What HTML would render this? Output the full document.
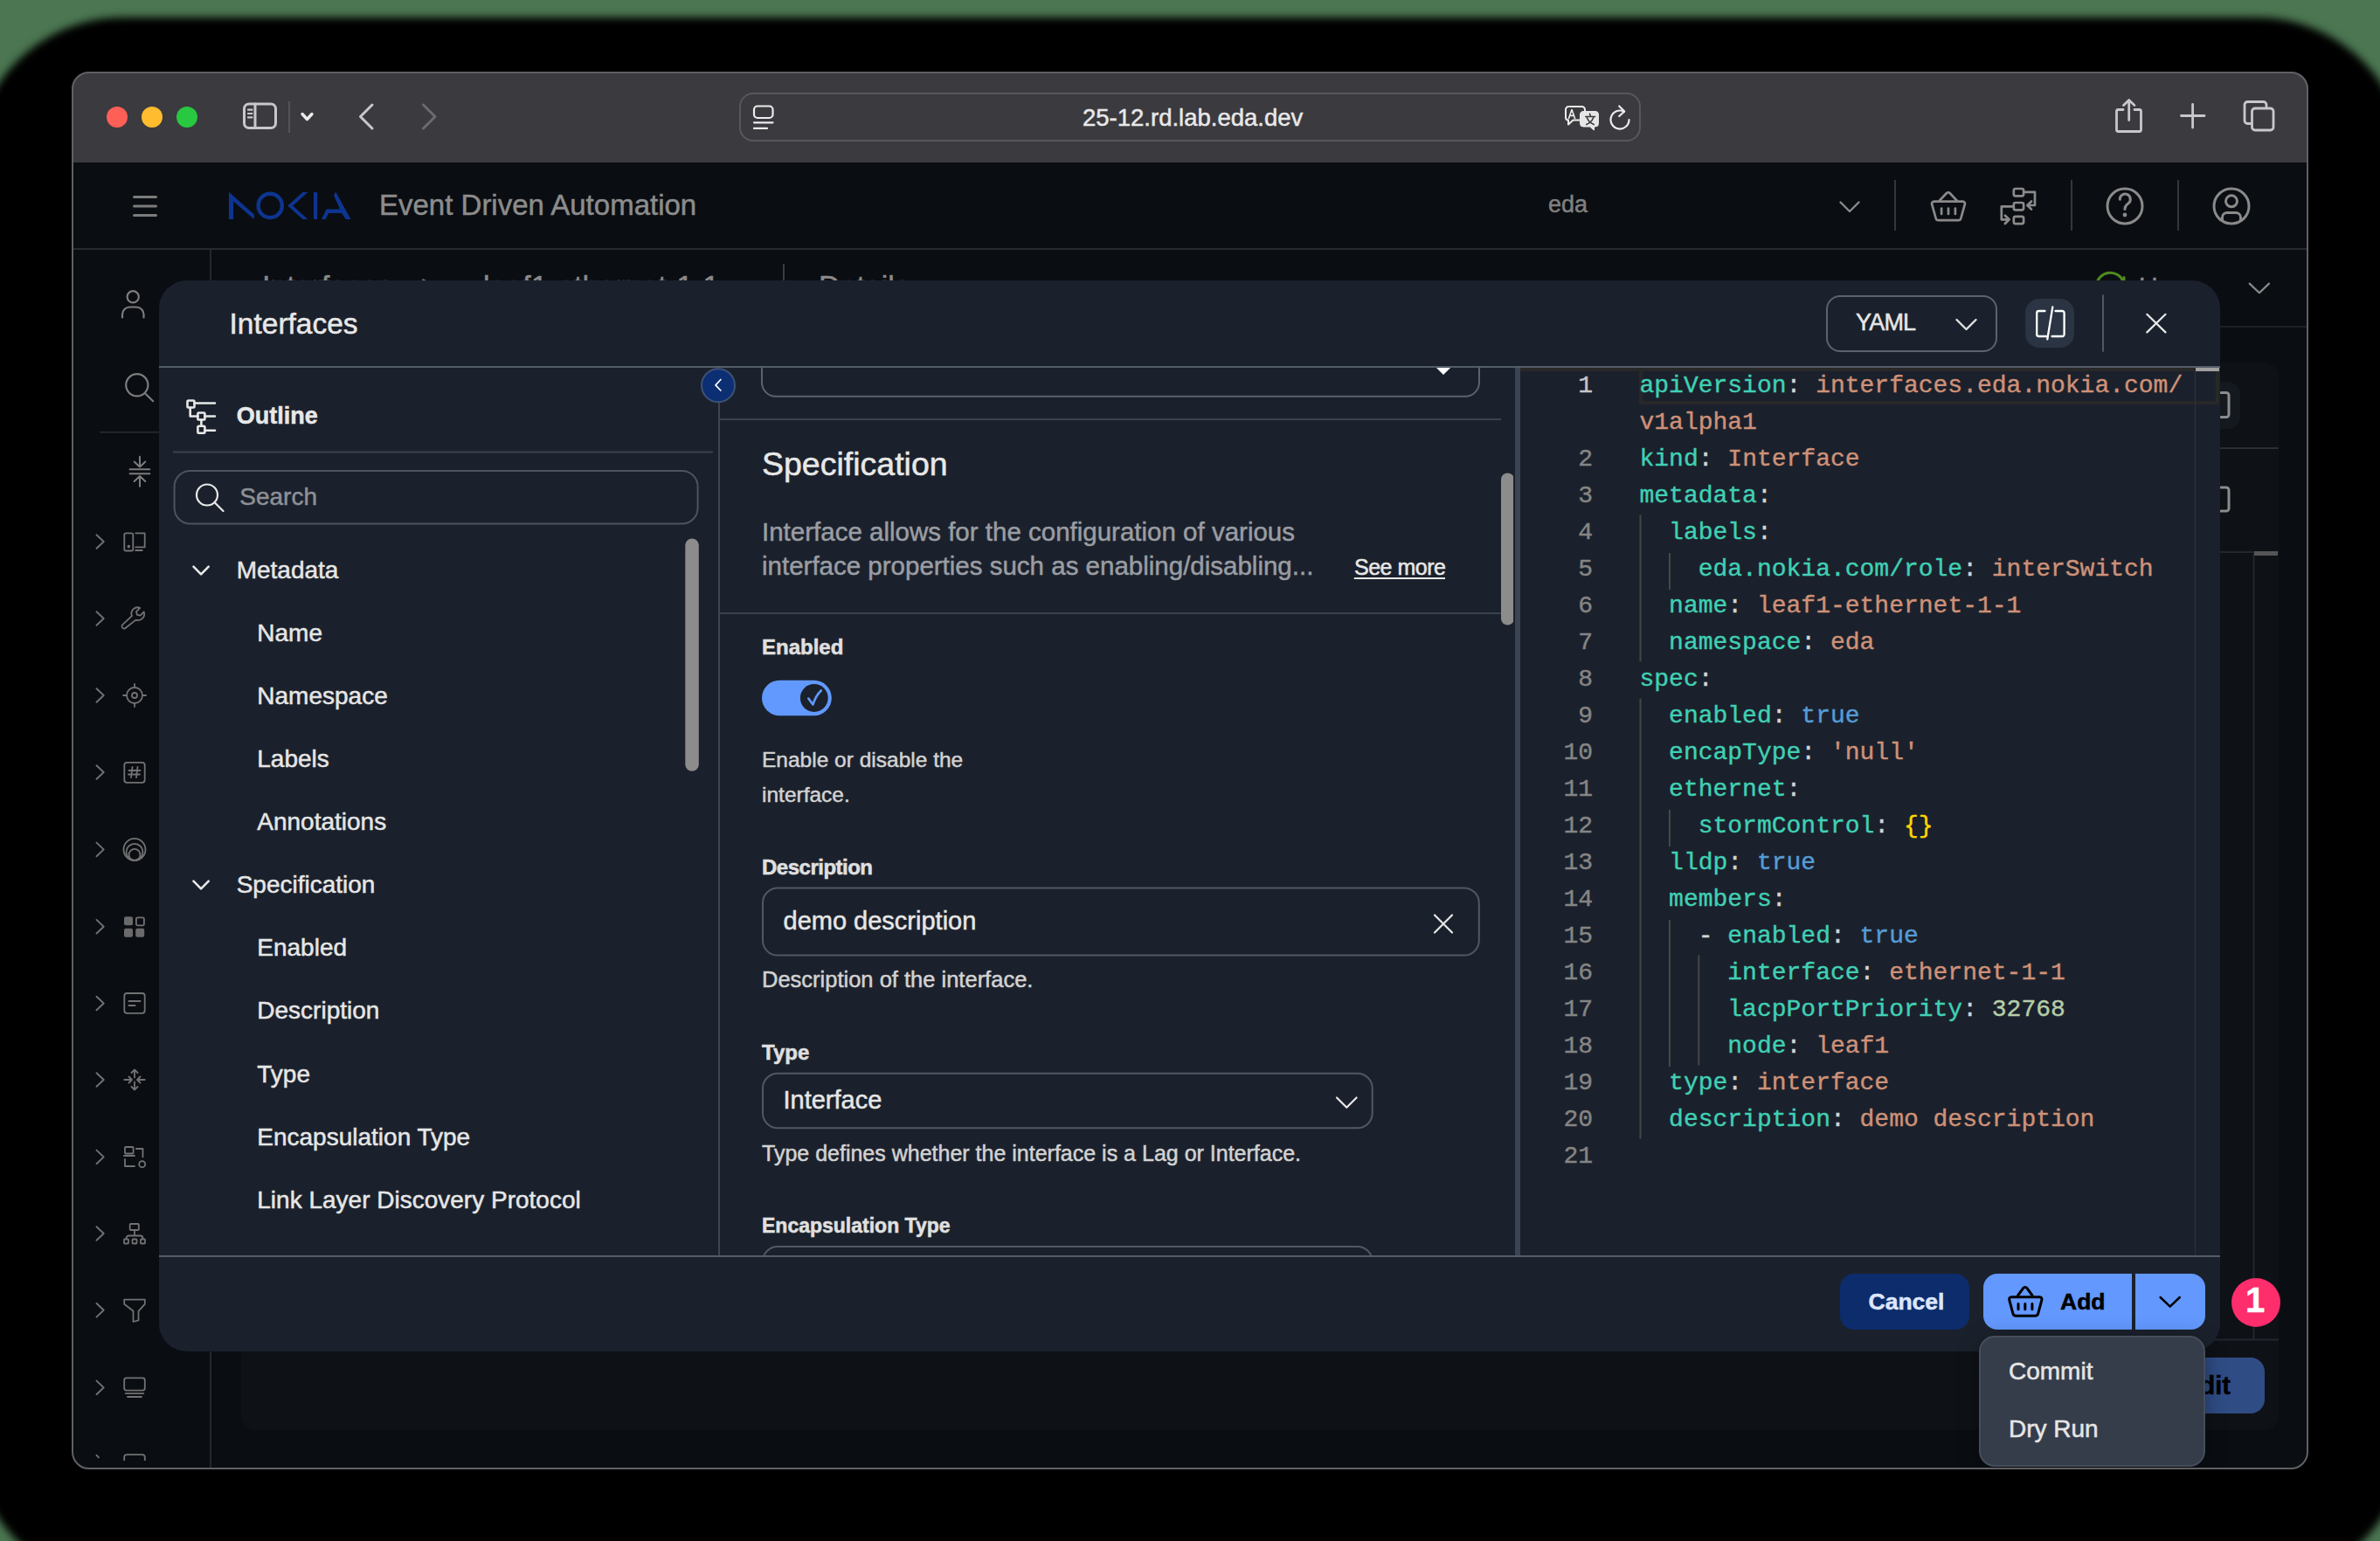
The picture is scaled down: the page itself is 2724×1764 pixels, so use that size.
<!DOCTYPE html>
<html><head><meta charset="utf-8">
<style>
*{box-sizing:border-box;margin:0;padding:0}
html,body{width:2724px;height:1764px;overflow:hidden;background:#4b7651;font-family:"Liberation Sans",sans-serif}
.a{position:absolute}
#shadow{position:absolute;left:-30px;top:20px;width:2784px;height:1794px;border-radius:170px;background:#000;filter:blur(5px)}
#win{position:absolute;left:82px;top:82px;width:2560px;height:1600px;border-radius:20px;overflow:hidden;background:#0a0d12}
#winb{position:absolute;left:82px;top:82px;width:2560px;height:1600px;border-radius:20px;border:2px solid #606064;pointer-events:none}
#pg{position:absolute;left:-82px;top:-82px;width:2724px;height:1764px}
.t{position:absolute;white-space:pre;line-height:1;-webkit-text-stroke:0.5px currentColor}
svg{position:absolute;overflow:visible}
</style></head><body>
<div id="shadow"></div>
<div id="win"><div id="pg">
  <!-- titlebar -->
  <div class="a" style="left:82px;top:82px;width:2560px;height:104px;background:#3b3a3f"></div>

  <!-- traffic lights -->
  <div class="a" style="left:122px;top:122px;width:24px;height:24px;border-radius:50%;background:#fe5f57"></div>
  <div class="a" style="left:162px;top:122px;width:24px;height:24px;border-radius:50%;background:#febc2e"></div>
  <div class="a" style="left:202px;top:122px;width:24px;height:24px;border-radius:50%;background:#28c840"></div>
  <svg style="left:0;top:0" width="2724" height="200" viewBox="0 0 2724 200" fill="none" stroke-linecap="round" stroke-linejoin="round">
    <rect x="279.5" y="119" width="36" height="27.5" rx="5.5" stroke="#c7c7cc" stroke-width="3"/>
    <line x1="292" y1="119" x2="292" y2="146.5" stroke="#c7c7cc" stroke-width="3"/>
    <path d="M284 125.7h4.5M284 130h4.5M284 134.4h4.5" stroke="#c7c7cc" stroke-width="2.2"/>
    <line x1="331" y1="116" x2="331" y2="152" stroke="#545358" stroke-width="2" stroke-linecap="butt"/>
    <path d="M346 130.5l5.5 6 5.5-6" stroke="#ececec" stroke-width="3.4"/>
    <path d="M426 120l-13.5 13.5 13.5 13.5" stroke="#c7c7cc" stroke-width="3"/>
    <path d="M484.5 120l13.5 13.5-13.5 13.5" stroke="#6b6a70" stroke-width="3"/>
    <rect x="847" y="107" width="1030" height="54" rx="15" stroke="#58575c" stroke-width="2"/>
    <rect x="863" y="121.5" width="21.5" height="13.5" rx="4" stroke="#ececec" stroke-width="2.2"/>
    <path d="M863 140.3h21.5M863 146.9h15" stroke="#ececec" stroke-width="2.2"/>
    <!-- translate -->
    <path d="M1797 122h13.5a3.5 3.5 0 0 1 3.5 3.5v2.5M1808 137.5h-7.5l-5.5 5v-5a3 3 0 0 1-3-3v-9a3.5 3.5 0 0 1 3.5-3.5" stroke="#ececec" stroke-width="2"/>
    <path d="M1795.5 135.5l3.5-10 3.5 10M1796.6 132.4h4.8" stroke="#ececec" stroke-width="1.6"/>
    <path d="M1812 127.5h14a3.5 3.5 0 0 1 3.5 3.5v10.5a3.5 3.5 0 0 1-3.5 3.5h-1.5v4l-5-4h-7.5a3.5 3.5 0 0 1-3.5-3.5v-10.5a3.5 3.5 0 0 1 3.5-3.5z" fill="#e6e6e6" stroke="#e6e6e6" stroke-width="1"/>
    <path d="M1814.8 133.5h10.8M1819.5 130.2l0.8 2.3M1816.3 134.5c1.5 4 4 6.5 8 8M1823.7 134.5c-1.5 4-4 6.5-8 8" stroke="#3b3a3f" stroke-width="1.6"/>
    <!-- reload -->
    <path d="M1864.5 137a10.5 10.5 0 1 1-5.5-9.2" stroke="#ececec" stroke-width="2.2" transform="rotate(0)"/>
    <path d="M1853.2 121.5l6 6-6 5.5" stroke="#ececec" stroke-width="2.2"/>
    <!-- share -->
    <path d="M2430 125.5h-5.5a2 2 0 0 0-2 2v21a2 2 0 0 0 2 2h24a2 2 0 0 0 2-2v-21a2 2 0 0 0-2-2h-5.5" stroke="#c7c7cc" stroke-width="2.8"/>
    <path d="M2436.7 137.5v-22.5M2430.5 120.5l6.2-6 6.2 6" stroke="#c7c7cc" stroke-width="2.8"/>
    <!-- plus -->
    <path d="M2509.6 119.5v26.5M2496.5 132.5h26.5" stroke="#c7c7cc" stroke-width="2.8"/>
    <!-- tabs -->
    <path d="M2576 141.5h-3.5a3.5 3.5 0 0 1-3.5-3.5v-18a3.5 3.5 0 0 1 3.5-3.5h18a3.5 3.5 0 0 1 3.5 3.5v3.5" stroke="#c7c7cc" stroke-width="2.8"/>
    <rect x="2577.5" y="124" width="24.5" height="25" rx="3.5" stroke="#c7c7cc" stroke-width="2.8"/>
  </svg>
  <div class="t" style="left:1239px;top:121.4px;font-size:27.5px;color:#e8e8e8">25-12.rd.lab.eda.dev</div>
  <!-- header -->
  <div class="a" style="left:82px;top:186px;width:2560px;height:100px;background:#0a0d12;border-bottom:2px solid #262a31"></div>

  <svg style="left:0;top:0" width="2724" height="300" viewBox="0 0 2724 300" fill="none" stroke-linecap="round" stroke-linejoin="round">
    <path d="M153.5 225.4h25M153.5 236h25M153.5 246.5h25" stroke="#7c7c7c" stroke-width="3"/>
    <g fill="#0d3590" stroke="none">
      <path d="M262.03 219.77L290.82 245.49V251.03L267.05 230.51V251.03H262.03Z"/>
      <path d="M352.4 220.1L335.1 235.4L352.4 251H346.5L329.2 235.4L346.5 220.1Z"/>
      <rect x="359" y="220.1" width="4.1" height="30.9"/>
      <path d="M384.3 219.8L401.5 251H395.7L391.1 243.9H376.1L372.6 251H368L373.5 239.6H389.1L382 223.4Z"/>
    </g>
    <circle cx="309.2" cy="235.4" r="13.6" stroke="#0d3590" stroke-width="4.4"/>
    <path d="M2106.5 231.5l10.5 10.5 10.5-10.5" stroke="#8a8a8a" stroke-width="2.4"/>
    <path d="M2169 206v58M2371 206v58M2493 206v58" stroke="#33363c" stroke-width="2" stroke-linecap="butt"/>
    <!-- basket -->
    <g stroke="#8a8a8a" stroke-width="2.7">
      <path d="M2220 229.5l8-8.5a2.5 2.5 0 0 1 3.6 0l8 8.5"/>
      <path d="M2213.5 230.6h33a2.5 2.5 0 0 1 2.4 3.1l-4.6 16.3a3 3 0 0 1-2.9 2.2h-22.8a3 3 0 0 1-2.9-2.2l-4.6-16.3a2.5 2.5 0 0 1 2.4-3.1z"/>
      <path d="M2222.1 238.5v6.5M2230 238.5v6.5M2237.9 238.5v6.5"/>
    </g>
    <!-- workflow -->
    <g stroke="#8a8a8a" stroke-width="2.7">
      <rect x="2304.8" y="216" width="11.3" height="8.3" rx="2"/>
      <rect x="2304.8" y="232" width="11.3" height="8.3" rx="2"/>
      <rect x="2304.8" y="247.8" width="11.3" height="8.3" rx="2"/>
      <path d="M2316.4 219.8h12.6v15.2h-8.5M2325 230.5l-4.6 4.5 4.6 4.6"/>
      <path d="M2304.3 236.3h-13.5v15h8.5M2294.9 246.7l4.7 4.6-4.7 4.7"/>
    </g>
    <!-- help -->
    <g stroke="#8a8a8a" stroke-width="3">
      <circle cx="2432" cy="236" r="20"/>
      <path d="M2426.3 228.3a6 6 0 1 1 9.5 4.6c-2.2 1.7-3.8 3.3-3.8 5.8v0.8"/>
    </g>
    <circle cx="2432" cy="246" r="2.4" fill="#8a8a8a"/>
    <!-- user -->
    <g stroke="#8a8a8a" stroke-width="3">
      <circle cx="2554" cy="236" r="20"/>
      <circle cx="2554" cy="230.3" r="6.5"/>
      <path d="M2543.5 252.5v-3.5a5.5 5.5 0 0 1 5.5-5.5h10a5.5 5.5 0 0 1 5.5 5.5v3.5"/>
    </g>
  </svg>
  <div class="t" style="left:434px;top:218.4px;font-size:33px;color:#8c8c8c">Event Driven Automation</div>
  <div class="t" style="left:1772px;top:221px;font-size:27px;color:#808080">eda</div>

  <svg style="left:0;top:0" width="300" height="1764" viewBox="0 0 300 1764" fill="none" stroke="#727272" stroke-width="1.8" stroke-linecap="round" stroke-linejoin="round">
    <circle cx="152.2" cy="339.8" r="6.6" stroke="#7c7c7c" stroke-width="2.2"/>
    <path d="M140 363.5v-3.5a8.5 8.5 0 0 1 8.5-8.5h7.5a8.5 8.5 0 0 1 8.5 8.5v3.5" stroke="#7c7c7c" stroke-width="2.2"/>
    <circle cx="156.8" cy="440.8" r="12.6" stroke="#7c7c7c" stroke-width="2.2"/>
    <path d="M166 450.2l9.2 9" stroke="#7c7c7c" stroke-width="2.2"/>
    <path d="M114 494.8H190" stroke="#23272e" stroke-width="2" stroke-linecap="butt"/>
    <path d="M148.6 537.3H171.3M148.6 542.2H171.3M160 522.7V534.5M153.7 528.5L160 534.5L166.3 528.5M160 556.7V545M153.7 551L160 545L166.3 551" stroke="#7c7c7c" stroke-width="2"/>
    <clipPath id="sbclip"><rect x="84" y="285" width="157" height="1387"/></clipPath>
    <g clip-path="url(#sbclip)"><path d="M110.5 612.2L118.7 620.0L110.5 627.8" stroke-width="1.9"/><g transform="translate(154 620)"><rect x="-11.7" y="-9.7" width="10" height="20.2" rx="1.8"/><circle cx="-6.7" cy="5.6" r="0.9" fill="#7c7c7c"/><path d="M1.2 -9.7H11.7V6.4H1.2M1.2 10H8.8"/></g><path d="M110.5 700.2L118.7 708.0L110.5 715.8" stroke-width="1.9"/><g transform="translate(154 708)"><path d="M-10.8 11.2a2.6 2.6 0 0 1-3.5-3.6l11.2-10.5a7.2 7.2 0 0 1 9.3-9.3l-4.2 4.3 0.9 3.6 3.6 0.9 4.2-4.2a7.2 7.2 0 0 1-9.3 9.2z"/></g><path d="M110.5 788.2L118.7 796.0L110.5 803.8" stroke-width="1.9"/><g transform="translate(154 796)"><circle r="9"/><circle r="3"/><path d="M0 -13V-9M0 9V13M-13 0H-9M9 0H13"/></g><path d="M110.5 876.2L118.7 884.0L110.5 891.8" stroke-width="1.9"/><g transform="translate(154 884)"><rect x="-11.7" y="-11.2" width="23.4" height="23" rx="3"/><path d="M-2.5 -6L-4 6M3.5 -6L2 6M-6.5 -2H6.5M-7 2.5H6"/></g><path d="M110.5 964.6L118.7 972.4L110.5 980.2" stroke-width="1.9"/><g transform="translate(154 972.4)"><circle r="12.5"/><circle cy="3" r="9.5"/><circle cy="6" r="6.5"/></g><path d="M110.5 1052.9L118.7 1060.7L110.5 1068.5" stroke-width="1.9"/><g transform="translate(154 1060.7)"><rect x="-12" y="-11.5" width="10" height="10" rx="2" fill="#6a6a6a" stroke="none"/><rect x="1.9" y="-10.3" width="9" height="9" rx="1.6"/><rect x="-12" y="2" width="10" height="10" rx="2" fill="#6a6a6a" stroke="none"/><rect x="1.2" y="2" width="10" height="10" rx="2" fill="#6a6a6a" stroke="none"/></g><path d="M110.5 1140.7L118.7 1148.5L110.5 1156.3" stroke-width="1.9"/><g transform="translate(154 1148.5)"><rect x="-11.7" y="-11.5" width="23.4" height="22.8" rx="3"/><path d="M-6.6 -2.5H6.6M-6.6 2.5H0.6"/></g><path d="M110.5 1228.2L118.7 1236.0L110.5 1243.8" stroke-width="1.9"/><g transform="translate(154 1236)"><path d="M0 -2.5V-11.5M-3.5 -8L0 -11.5L3.5 -8M0 2.5V11.5M-3.5 8L0 11.5L3.5 8M-11.7 0H-3M-6.5 -3.5L-3 0L-6.5 3.5M11.7 0H3M6.5 -3.5L3 0L6.5 3.5"/></g><path d="M110.5 1316.6L118.7 1324.4L110.5 1332.2" stroke-width="1.9"/><g transform="translate(154 1324.4)"><rect x="-11" y="-11.4" width="9.6" height="7.5" rx="0.8"/><path d="M-12 -1.4H0M2 -9.4H9.5V0M-11 2.6V10.6H0"/><circle cx="8.7" cy="8.3" r="3.5"/></g><path d="M110.5 1404.2L118.7 1412.0L110.5 1419.8" stroke-width="1.9"/><g transform="translate(154 1412)"><rect x="-5.3" y="-11" width="10.1" height="7" rx="0.8"/><path d="M0 -4V2.5M-9.5 5.5a3 3 0 0 1 3-3H6.5a3 3 0 0 1 3 3"/><rect x="-12" y="6.5" width="5" height="5" rx="0.8"/><rect x="-2.5" y="6.5" width="5" height="5" rx="0.8"/><rect x="7" y="6.5" width="5" height="5" rx="0.8"/></g><path d="M110.5 1492.0L118.7 1499.8L110.5 1507.6" stroke-width="1.9"/><g transform="translate(154 1499.8)"><path d="M-11.8 -12.2H11.8V-7L4.5 1V11.5L-1.5 13.2V1L-11.8 -7Z"/></g><path d="M110.5 1580.6L118.7 1588.4L110.5 1596.2" stroke-width="1.9"/><g transform="translate(154 1588.4)"><rect x="-11.8" y="-11.1" width="23.6" height="14.3" rx="2.5"/><path d="M-10.3 6.8H10.3M-8 10.6H8"/></g><path d="M110.5 1665.8L113 1668.3" stroke-width="1.9"/><g transform="translate(154 1667.6)"><path d="M-11.8 6V0.5a3 3 0 0 1 3-3H8.8a3 3 0 0 1 3 3V6"/></g></g>
  </svg>
  <!-- sidebar border -->
  <div class="a" style="left:240px;top:285px;width:2px;height:1400px;background:#23272e"></div>

  <!-- background page -->
  <div class="a" style="left:276px;top:415px;width:2332px;height:1222px;border-radius:16px;background:#0e1116"></div>
  <div class="a" style="left:241px;top:373px;width:2400px;height:2px;background:#1c2027"></div>
  <div class="t" style="left:300px;top:310px;font-size:34px;color:#8a8a8a">Interfaces</div>
  <div class="t" style="left:482px;top:310px;font-size:34px;color:#8a8a8a">&gt;</div>
  <div class="t" style="left:553px;top:310px;font-size:34px;color:#8a8a8a">leaf1-ethernet-1-1</div>
  <div class="a" style="left:896px;top:302px;width:2px;height:40px;background:#3a3d43"></div>
  <div class="t" style="left:937px;top:310px;font-size:34px;color:#8a8a8a">Details</div>
  <div class="t" style="left:2448px;top:313px;font-size:30px;color:#8a8a8a">Up</div>
  <svg style="left:0;top:0" width="2724" height="1764" viewBox="0 0 2724 1764" fill="none" stroke-linecap="round" stroke-linejoin="round">
    <path d="M2399.5 326a16 16 0 0 1 31 -3M2431 317.5v7h-6.5" stroke="#4d8a1e" stroke-width="3"/>
    <path d="M2574.7 324.6L2585.9 335.2L2597 324.6" stroke="#8a8a8a" stroke-width="2.2"/>
    <rect x="2480" y="437" width="84" height="54" rx="14" fill="#14181f" stroke="none"/>
    <path d="M2542 449.5h6a3 3 0 0 1 3 3v22a3 3 0 0 1-3 3h-6" stroke="#8c8c8c" stroke-width="3"/>
    <path d="M2542 558h6a3 3 0 0 1 3 3v21a3 3 0 0 1-3 3h-6" stroke="#8c8c8c" stroke-width="3"/>
    <path d="M276 513H2608" stroke="#2a2e35" stroke-width="2" stroke-linecap="butt"/>
    <path d="M276 632H2608M2579.5 634V1533.5M276 1533.5H2608" stroke="#23272e" stroke-width="2" stroke-linecap="butt"/>
    <rect x="2580" y="631" width="27" height="5" fill="#555" stroke="none"/>
  </svg>
  <div class="a" style="left:2470px;top:1554px;width:122px;height:64px;border-radius:16px;background:#2f4c85"></div>
  <div class="t" style="left:2453px;width:100px;text-align:right;top:1571.8px;font-size:29px;font-weight:bold;color:#000">Edit</div>
  <!-- modal -->
  <div id="modal" class="a" style="left:182px;top:321px;width:2359px;height:1226px;border-radius:32px;background:#1b212c"></div>


  <!-- form panel -->
  <svg style="left:0;top:0" width="2724" height="1764" viewBox="0 0 2724 1764" fill="none" stroke-linecap="round" stroke-linejoin="round">
    <clipPath id="formclip"><rect x="824" y="421" width="908" height="1016"/></clipPath>
    <g clip-path="url(#formclip)">
      <rect x="872" y="380" width="821" height="73.8" rx="16" stroke="#5a6370" stroke-width="2"/>
      <path d="M1644 421H1660.1L1652 429.1Z" fill="#ffffff" stroke="none"/>
      <path d="M824 480H1718M824 702H1718" stroke="#3a4250" stroke-width="2" stroke-linecap="butt"/>
      <path d="M1549.8 662H1654" stroke="#e8e8e8" stroke-width="1.8" stroke-linecap="butt"/>
      <rect x="872" y="778.8" width="79.8" height="40.4" rx="20.2" fill="#6199fe" stroke="none"/>
      <circle cx="931.8" cy="799" r="15.9" fill="#1b212c" stroke="none"/>
      <path d="M925.3 799.5L930.4 806.5C932.5 800 935.5 794.5 939.8 790.5" stroke="#6199fe" stroke-width="2.6"/>
      <rect x="873" y="1016.6" width="819.8" height="77" rx="17" stroke="#4f5866" stroke-width="2"/>
      <path d="M1642 1047.5L1662 1067.5M1662 1047.5L1642 1067.5" stroke="#e8e8e8" stroke-width="2.2"/>
      <rect x="873" y="1228.7" width="697.7" height="62.6" rx="17" stroke="#4f5866" stroke-width="2"/>
      <path d="M1530 1256.5l11.3 11.3 11.3-11.3" stroke="#e8e8e8" stroke-width="2.2"/>
      <rect x="873" y="1427" width="697.7" height="62.6" rx="17" stroke="#4f5866" stroke-width="2"/>
      <rect x="1718" y="541.4" width="15" height="174" rx="7.5" fill="#8c8c8c" stroke="none"/>
    </g>
    <path d="M1737 421V1437" stroke="#3b4452" stroke-width="6" stroke-linecap="butt"/>
  </svg>
<div class="t" style="left:872px;top:513.4px;font-size:37.5px;font-weight:normal;color:#e8e8e8;">Specification</div>
<div class="t" style="left:872px;top:593.6px;font-size:29.5px;font-weight:normal;color:#9a9da3;">Interface allows for the configuration of various</div>
<div class="t" style="left:872px;top:633.4px;font-size:29.5px;font-weight:normal;color:#9a9da3;">interface properties such as enabling/disabling...</div>
<div class="t" style="left:1550px;top:636.8px;font-size:25px;font-weight:normal;color:#e8e8e8;letter-spacing:-0.5px">See more</div>
<div class="t" style="left:872px;top:729.1px;font-size:24px;font-weight:bold;color:#e0e0e0;">Enabled</div>
<div class="t" style="left:872px;top:857.8px;font-size:24.5px;font-weight:normal;color:#d2d2d2;">Enable or disable the</div>
<div class="t" style="left:872px;top:898.4px;font-size:24.5px;font-weight:normal;color:#d2d2d2;">interface.</div>
<div class="t" style="left:872px;top:980.6px;font-size:24px;font-weight:bold;color:#e0e0e0;letter-spacing:-0.5px">Description</div>
<div class="t" style="left:896.5px;top:1040.0px;font-size:29px;font-weight:normal;color:#e6e6e6;">demo description</div>
<div class="t" style="left:872px;top:1108.7px;font-size:25.5px;font-weight:normal;color:#d2d2d2;">Description of the interface.</div>
<div class="t" style="left:872px;top:1193.1px;font-size:24px;font-weight:bold;color:#e0e0e0;">Type</div>
<div class="t" style="left:896.5px;top:1244.8px;font-size:29px;font-weight:normal;color:#e6e6e6;">Interface</div>
<div class="t" style="left:872px;top:1308.2px;font-size:25px;font-weight:normal;color:#d2d2d2;">Type defines whether the interface is a Lag or Interface.</div>
<div class="t" style="left:872px;top:1391.8px;font-size:23px;font-weight:bold;color:#e0e0e0;">Encapsulation Type</div>

  <!-- editor -->
  <style>
  .m{position:absolute;left:1700px;width:123px;text-align:right;font-family:"Liberation Mono",monospace;font-size:28px;line-height:42px;height:42px;white-space:pre;-webkit-text-stroke:0.4px currentColor}
  .c{position:absolute;left:1876.5px;font-family:"Liberation Mono",monospace;font-size:28px;line-height:42px;height:42px;white-space:pre;-webkit-text-stroke:0.4px currentColor}
  </style>
  <div class="a" style="left:1876px;top:421px;width:664px;height:42px;border:4px solid #282828;border-top:none"></div>
  <div class="a" style="left:1740px;top:421px;width:772.6px;height:4px;background:#282828"></div>
  <div class="a" style="left:2512.6px;top:421px;width:27.4px;height:4px;background:#a0a0a0"></div>
  <div class="a" style="left:2512px;top:425px;width:1px;height:1012px;background:#2a3340"></div>
  <svg style="left:0;top:0" width="2724" height="1764" viewBox="0 0 2724 1764" fill="none" stroke="#464646" stroke-width="2"><path d="M1877.5 589.4V757.4"/><path d="M1877.5 799.4V1303.4"/><path d="M1911 632.9V674.9"/><path d="M1911 926.9V968.9"/><path d="M1911 1052.9V1220.9"/><path d="M1944.3 1093.4V1219.4"/></svg>
  <div class="m" style="top:421.4px;color:#c6c6c6">1</div><div class="m" style="top:505.4px;color:#858585">2</div><div class="m" style="top:547.4px;color:#858585">3</div><div class="m" style="top:589.4px;color:#858585">4</div><div class="m" style="top:631.4px;color:#858585">5</div><div class="m" style="top:673.4px;color:#858585">6</div><div class="m" style="top:715.4px;color:#858585">7</div><div class="m" style="top:757.4px;color:#858585">8</div><div class="m" style="top:799.4px;color:#858585">9</div><div class="m" style="top:841.4px;color:#858585">10</div><div class="m" style="top:883.4px;color:#858585">11</div><div class="m" style="top:925.4px;color:#858585">12</div><div class="m" style="top:967.4px;color:#858585">13</div><div class="m" style="top:1009.4px;color:#858585">14</div><div class="m" style="top:1051.4px;color:#858585">15</div><div class="m" style="top:1093.4px;color:#858585">16</div><div class="m" style="top:1135.4px;color:#858585">17</div><div class="m" style="top:1177.4px;color:#858585">18</div><div class="m" style="top:1219.4px;color:#858585">19</div><div class="m" style="top:1261.4px;color:#858585">20</div><div class="m" style="top:1303.4px;color:#858585">21</div>
  <div class="c" style="top:421.4px"><span style="color:#40d0b4">apiVersion</span><span style="color:#d4d4d4">:</span><span style="color:#ce9178">&nbsp;interfaces.eda.nokia.com/</span></div><div class="c" style="top:463.4px"><span style="color:#ce9178">v1alpha1</span></div><div class="c" style="top:505.4px"><span style="color:#40d0b4">kind</span><span style="color:#d4d4d4">:</span><span style="color:#ce9178">&nbsp;Interface</span></div><div class="c" style="top:547.4px"><span style="color:#40d0b4">metadata</span><span style="color:#d4d4d4">:</span></div><div class="c" style="top:589.4px"><span style="color:#40d0b4">&nbsp;&nbsp;labels</span><span style="color:#d4d4d4">:</span></div><div class="c" style="top:631.4px"><span style="color:#40d0b4">&nbsp;&nbsp;&nbsp;&nbsp;eda.nokia.com/role</span><span style="color:#d4d4d4">:</span><span style="color:#ce9178">&nbsp;interSwitch</span></div><div class="c" style="top:673.4px"><span style="color:#40d0b4">&nbsp;&nbsp;name</span><span style="color:#d4d4d4">:</span><span style="color:#ce9178">&nbsp;leaf1-ethernet-1-1</span></div><div class="c" style="top:715.4px"><span style="color:#40d0b4">&nbsp;&nbsp;namespace</span><span style="color:#d4d4d4">:</span><span style="color:#ce9178">&nbsp;eda</span></div><div class="c" style="top:757.4px"><span style="color:#40d0b4">spec</span><span style="color:#d4d4d4">:</span></div><div class="c" style="top:799.4px"><span style="color:#40d0b4">&nbsp;&nbsp;enabled</span><span style="color:#d4d4d4">:</span><span style="color:#569cd6">&nbsp;true</span></div><div class="c" style="top:841.4px"><span style="color:#40d0b4">&nbsp;&nbsp;encapType</span><span style="color:#d4d4d4">:</span><span style="color:#ce9178">&nbsp;'null'</span></div><div class="c" style="top:883.4px"><span style="color:#40d0b4">&nbsp;&nbsp;ethernet</span><span style="color:#d4d4d4">:</span></div><div class="c" style="top:925.4px"><span style="color:#40d0b4">&nbsp;&nbsp;&nbsp;&nbsp;stormControl</span><span style="color:#d4d4d4">:</span><span style="color:#d4d4d4">&nbsp;</span><span style="color:#ffd700">{}</span></div><div class="c" style="top:967.4px"><span style="color:#40d0b4">&nbsp;&nbsp;lldp</span><span style="color:#d4d4d4">:</span><span style="color:#569cd6">&nbsp;true</span></div><div class="c" style="top:1009.4px"><span style="color:#40d0b4">&nbsp;&nbsp;members</span><span style="color:#d4d4d4">:</span></div><div class="c" style="top:1051.4px"><span style="color:#d4d4d4">&nbsp;&nbsp;&nbsp;&nbsp;-&nbsp;</span><span style="color:#40d0b4">enabled</span><span style="color:#d4d4d4">:</span><span style="color:#569cd6">&nbsp;true</span></div><div class="c" style="top:1093.4px"><span style="color:#40d0b4">&nbsp;&nbsp;&nbsp;&nbsp;&nbsp;&nbsp;interface</span><span style="color:#d4d4d4">:</span><span style="color:#ce9178">&nbsp;ethernet-1-1</span></div><div class="c" style="top:1135.4px"><span style="color:#40d0b4">&nbsp;&nbsp;&nbsp;&nbsp;&nbsp;&nbsp;lacpPortPriority</span><span style="color:#d4d4d4">:</span><span style="color:#b5cea8">&nbsp;32768</span></div><div class="c" style="top:1177.4px"><span style="color:#40d0b4">&nbsp;&nbsp;&nbsp;&nbsp;&nbsp;&nbsp;node</span><span style="color:#d4d4d4">:</span><span style="color:#ce9178">&nbsp;leaf1</span></div><div class="c" style="top:1219.4px"><span style="color:#40d0b4">&nbsp;&nbsp;type</span><span style="color:#d4d4d4">:</span><span style="color:#ce9178">&nbsp;interface</span></div><div class="c" style="top:1261.4px"><span style="color:#40d0b4">&nbsp;&nbsp;description</span><span style="color:#d4d4d4">:</span><span style="color:#ce9178">&nbsp;demo&nbsp;description</span></div><div class="c" style="top:1303.4px"></div>
  <!-- modal content -->
  <div class="t" style="left:262.5px;top:353.5px;font-size:33.5px;color:#e8e8e8">Interfaces</div>
  <div class="a" style="left:2090px;top:337.5px;width:196px;height:65.5px;border:2px solid #5b6370;border-radius:16px"></div>
  <div class="t" style="left:2124px;top:356px;font-size:27px;color:#e6e6e6;letter-spacing:-0.8px">YAML</div>
  <div class="a" style="left:2318px;top:342px;width:56px;height:56px;border-radius:16px;background:#2b3443"></div>
  <svg style="left:0;top:0" width="2724" height="1764" viewBox="0 0 2724 1764" fill="none" stroke-linecap="round" stroke-linejoin="round">
    <path d="M2239.5 366l11 11 11-11" stroke="#e0e0e0" stroke-width="2.4"/>
    <path d="M2340.5 356H2333.5a2.3 2.3 0 0 0-2.3 2.3V382.7a2.3 2.3 0 0 0 2.3 2.3H2342M2352.5 356H2360.3a2.3 2.3 0 0 1 2.3 2.3V382.7a2.3 2.3 0 0 1-2.3 2.3H2348.5M2349.3 351.5L2343.3 388.3" stroke="#ffffff" stroke-width="2.3"/>
    <path d="M2407 337.5V402.7" stroke="#4e5866" stroke-width="2" stroke-linecap="butt"/>
    <path d="M2457.3 359.8L2478.5 380.4M2478.5 359.8L2457.3 380.4" stroke="#e8e8e8" stroke-width="2.2"/>
    <!-- header border -->
    <path d="M182 420H2541" stroke="#535d6a" stroke-width="2" stroke-linecap="butt"/>
    <!-- outline icon -->
    <g stroke="#e8e8e8" stroke-width="2.6">
      <rect x="214.5" y="458.5" width="8" height="8" rx="1.2"/>
      <rect x="226.4" y="472.5" width="8" height="8" rx="1.2"/>
      <rect x="226.4" y="487.7" width="8" height="8" rx="1.2"/>
      <path d="M222.5 461.5H246M217.7 466.5V476.5H226.4M234.4 476.5H246M230.4 480.5V487.7M234.4 492.8H246"/>
    </g>
    <path d="M198 517.6H816" stroke="#3a4250" stroke-width="2" stroke-linecap="butt"/>
    <rect x="199.6" y="539" width="599" height="60.5" rx="18" stroke="#4b5462" stroke-width="2"/>
    <circle cx="237" cy="566.5" r="12" stroke="#e8e8e8" stroke-width="2.2"/>
    <path d="M245.7 575.2L255.5 585" stroke="#e8e8e8" stroke-width="2.2"/>
    <g stroke="#e8e8e8" stroke-width="2.6"><path d="M221.5 648.7l8.6 8.6 8.6-8.6" /><path d="M221.5 1008.7l8.6 8.6 8.6-8.6" /></g>
    <rect x="784.3" y="616.6" width="15.5" height="266.2" rx="7.75" fill="#8c8c8c" stroke="none"/>
    <!-- divider -->
    <path d="M823 460V1438" stroke="#3d4550" stroke-width="2" stroke-linecap="butt"/>
    <circle cx="822" cy="441.2" r="19" fill="#0c2e72" stroke="#3d5276" stroke-width="2"/>
    <path d="M824.9 434.5L819 440.8L824.9 447" stroke="#ffffff" stroke-width="1.7"/>
  </svg>
  <div class="t" style="left:270.7px;top:463.3px;font-size:27px;font-weight:bold;color:#e8e8e8">Outline</div>
  <div class="t" style="left:274.3px;top:555.4px;font-size:28px;color:#8d9096">Search</div>
<div class="t" style="left:270.7px;top:639.2px;font-size:28px;color:#e6e6e6">Metadata</div>
<div class="t" style="left:294.3px;top:710.8px;font-size:28px;color:#e6e6e6">Name</div>
<div class="t" style="left:294.3px;top:782.9px;font-size:28px;color:#e6e6e6">Namespace</div>
<div class="t" style="left:294.3px;top:855.0px;font-size:28px;color:#e6e6e6">Labels</div>
<div class="t" style="left:294.3px;top:927.1px;font-size:28px;color:#e6e6e6">Annotations</div>
<div class="t" style="left:270.7px;top:999.2px;font-size:28px;color:#e6e6e6">Specification</div>
<div class="t" style="left:294.3px;top:1071.3px;font-size:28px;color:#e6e6e6">Enabled</div>
<div class="t" style="left:294.3px;top:1143.4px;font-size:28px;color:#e6e6e6">Description</div>
<div class="t" style="left:294.3px;top:1215.5px;font-size:28px;color:#e6e6e6">Type</div>
<div class="t" style="left:294.3px;top:1287.6px;font-size:28px;color:#e6e6e6">Encapsulation Type</div>
<div class="t" style="left:294.3px;top:1359.7px;font-size:28px;color:#e6e6e6">Link Layer Discovery Protocol</div>

  <!-- footer -->
  <div class="a" style="left:182px;top:1437px;width:2359px;height:2px;background:#535d6a"></div>
  <div class="a" style="left:2106px;top:1458px;width:148px;height:64px;border-radius:16px;background:#0c2c6b"></div>
  <div class="t" style="left:2138.5px;top:1476.5px;font-size:26.5px;font-weight:bold;color:#dde6fb">Cancel</div>
  <div class="a" style="left:2270px;top:1458px;width:254px;height:64px;border-radius:16px;background:#6398ff"></div>
  <div class="a" style="left:2440px;top:1458px;width:4px;height:64px;background:#1b212c"></div>
  <div class="t" style="left:2358px;top:1476.5px;font-size:26.5px;font-weight:bold;color:#000000">Add</div>
  <svg style="left:0;top:0" width="2724" height="1764" viewBox="0 0 2724 1764" fill="none" stroke-linecap="round" stroke-linejoin="round">
    <g stroke="#000" stroke-width="3">
      <path d="M2309.5 1483l6.3-8.6a2.5 2.5 0 0 1 4 0l6.3 8.6"/>
      <path d="M2302 1484.7h32.5a2.5 2.5 0 0 1 2.4 3.2l-4.2 15.7a3.5 3.5 0 0 1-3.4 2.6h-22a3.5 3.5 0 0 1-3.4-2.6l-4.2-15.7a2.5 2.5 0 0 1 2.4-3.2z"/>
      <path d="M2310 1492.5v6.2M2317.8 1492.5v6.2M2325.9 1492.5v6.2"/>
    </g>
    <path d="M2472.6 1485l11.1 10.6 11.1-10.6" stroke="#000" stroke-width="2.5"/>
  </svg>
  <div class="a" style="left:2554px;top:1463px;width:56px;height:56px;border-radius:50%;background:#fe2d6b"></div>
  <div class="t" style="left:2553px;top:1468.3px;width:56px;text-align:center;font-size:40px;font-weight:bold;color:#ffffff">1</div>
  <!-- dropdown menu -->
  <div class="a" style="left:2264.5px;top:1529px;width:259.5px;height:150px;border-radius:18px;background:#353d4b;border:2px solid #454d5a;box-shadow:0 4px 24px rgba(0,0,0,0.35)"></div>
  <div class="t" style="left:2299px;top:1556.2px;font-size:28px;color:#e6e6e6">Commit</div>
  <div class="t" style="left:2299px;top:1622.4px;font-size:28px;color:#e6e6e6">Dry Run</div>
</div></div>
<div id="winb"></div>
</body></html>
